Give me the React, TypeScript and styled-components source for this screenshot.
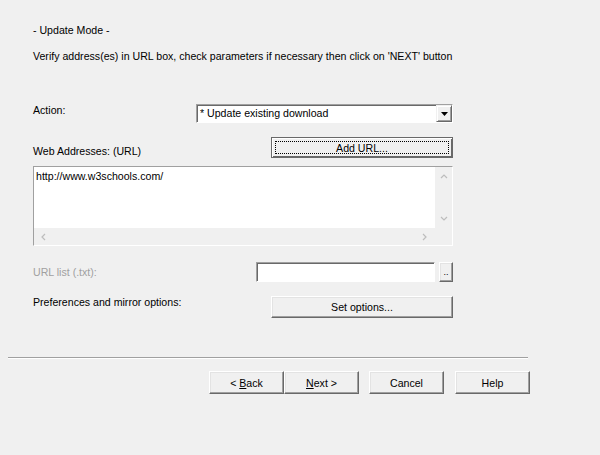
import React from "react";
import styled, { createGlobalStyle } from "styled-components";

const GlobalStyle = createGlobalStyle`
  html, body {
    margin: 0;
    padding: 0;
    background: #f0f0f0;
  }
  body {
    font-family: "Liberation Sans", Arial, sans-serif;
    font-size: 10.6px;
    color: #000;
  }
`;

const Window = styled.div`
  width: 600px;
  height: 455px;
  box-sizing: border-box;
  background: #f0f0f0;
  padding-top: 24px;
  display: flex;
  flex-direction: column;
`;

const Content = styled.div`
  width: 420px;
  margin-left: 33px;
  display: flex;
  flex-direction: column;
`;

const Text = styled.div<{ $top?: number }>`
  line-height: 13px;
  margin-top: ${(p) => p.$top ?? 0}px;
  white-space: nowrap;
`;

const Row = styled.div<{ $top: number; $label: number }>`
  display: grid;
  grid-template-columns: ${(p) => p.$label}px 1fr;
  align-items: start;
  margin-top: ${(p) => p.$top}px;
`;

const Label = styled.div<{ $pad?: number; $disabled?: boolean }>`
  line-height: 13px;
  padding-top: ${(p) => p.$pad ?? 0}px;
  color: ${(p) => (p.$disabled ? "#a0a0a0" : "#000")};
  white-space: nowrap;
`;

const Select = styled.div`
  height: 19px;
  box-sizing: border-box;
  display: flex;
  align-items: stretch;
  background: #fff;
  border-top: 1px solid #a0a0a0;
  border-left: 1px solid #a0a0a0;
  border-right: 1px solid #fff;
  border-bottom: 1px solid #fff;
  box-shadow: inset 1px 1px 0 #696969;
`;

const SelectText = styled.div`
  flex: 1;
  padding-left: 3px;
  line-height: 16px;
`;

const DropButton = styled.div`
  width: 16px;
  box-sizing: border-box;
  background: #f0f0f0;
  border-top: 1px solid #f0f0f0;
  border-left: 1px solid #f0f0f0;
  border-right: 1px solid #696969;
  border-bottom: 1px solid #696969;
  box-shadow: inset 1px 1px 0 #fff, inset -1px -1px 0 #a0a0a0;
  display: flex;
  align-items: center;
  justify-content: center;
`;

const Button = styled.button<{ $default?: boolean; $h?: number }>`
  height: ${(p) => p.$h ?? 22}px;
  box-sizing: border-box;
  margin: 0;
  padding: 0;
  font-family: inherit;
  font-size: 10.6px;
  color: #000;
  background: #f0f0f0;
  border: 1px solid;
  border-color: ${(p) =>
    p.$default ? "#696969" : "#fff #696969 #696969 #fff"};
  box-shadow: ${(p) =>
    p.$default
      ? "inset 1px 1px 0 #fff, inset -1px -1px 0 #696969"
      : "inset -1px -1px 0 #a0a0a0, inset 1px 1px 0 #e3e3e3"};
  display: flex;
  align-items: center;
  justify-content: center;
  cursor: default;
`;

const Focus = styled.span`
  flex: 1;
  align-self: stretch;
  margin: 3px;
  border: 1px dotted #000;
  display: flex;
  align-items: center;
  justify-content: center;
`;

const TextArea = styled.div`
  margin-top: 8px;
  height: 80px;
  box-sizing: border-box;
  border-top: 1px solid #a0a0a0;
  border-left: 1px solid #a0a0a0;
  border-right: 1px solid #fff;
  border-bottom: 1px solid #fff;
  box-shadow: inset 1px 1px 0 #696969;
  display: grid;
  grid-template-columns: 1fr 17px;
  grid-template-rows: 1fr 17px;
  background: #f0f0f0;
`;

const TextBody = styled.div`
  background: #fff;
  padding: 3px 0 0 2px;
  line-height: 13px;
`;

const ScrollV = styled.div`
  display: flex;
  flex-direction: column;
  justify-content: space-between;
  align-items: center;
  padding: 6px 0 6px;
  background: #f0f0f0;
`;

const ScrollH = styled.div`
  display: flex;
  justify-content: space-between;
  align-items: center;
  padding: 0 7px 0 6px;
  background: #f0f0f0;
`;

const Corner = styled.div`
  background: #f0f0f0;
`;

const InputGroup = styled.div`
  display: flex;
  gap: 4px;
`;

const Input = styled.div`
  flex: 1;
  height: 20px;
  box-sizing: border-box;
  background: #fff;
  border-top: 1px solid #a0a0a0;
  border-left: 1px solid #a0a0a0;
  border-right: 1px solid #fff;
  border-bottom: 1px solid #fff;
  box-shadow: inset 1px 1px 0 #696969;
`;

const SmallButton = styled(Button)`
  width: 14px;
  align-items: flex-end;
  padding-bottom: 4px;
  font-size: 9px;
  line-height: 9px;
`;

const Separator = styled.div`
  margin: 39px 0 0 8px;
  width: 520px;
  height: 1px;
  background: #a0a0a0;
  border-bottom: 1px solid #fff;
`;

const Footer = styled.div`
  display: flex;
  margin: 12px 0 0 209px;
`;

const NavButton = styled(Button)<{ $gap?: number }>`
  width: 75px;
  height: 23px;
  margin-left: ${(p) => p.$gap ?? 0}px;
`;

const Chevron = ({ d }: { d: string }) => (
  <svg width="8" height="6" viewBox="0 0 8 6">
    <path d={d} fill="none" stroke="#bdbdbd" strokeWidth="1.2" />
  </svg>
);

const ChevronH = ({ d }: { d: string }) => (
  <svg width="6" height="8" viewBox="0 0 6 8">
    <path d={d} fill="none" stroke="#bdbdbd" strokeWidth="1.2" />
  </svg>
);

export default function App() {
  return (
    <>
      <GlobalStyle />
      <Window>
        <Content>
          <Text>- Update Mode -</Text>
          <Text $top={13}>
            Verify address(es) in URL box, check parameters if necessary then
            click on 'NEXT' button
          </Text>

          <Row $top={41} $label={163}>
            <Label>Action:</Label>
            <Select>
              <SelectText>* Update existing download</SelectText>
              <DropButton>
                <svg width="7" height="4" viewBox="0 0 7 4">
                  <path d="M0 0h7L3.5 4z" fill="#000" />
                </svg>
              </DropButton>
            </Select>
          </Row>

          <Row $top={14} $label={238}>
            <Label $pad={8}>Web Addresses: (URL)</Label>
            <Button $default $h={21}>
              <Focus>Add URL...</Focus>
            </Button>
          </Row>

          <TextArea>
            <TextBody>http://www.w3schools.com/</TextBody>
            <ScrollV>
              <Chevron d="M1 5L4 2L7 5" />
              <Chevron d="M1 1L4 4L7 1" />
            </ScrollV>
            <ScrollH>
              <ChevronH d="M5 1L2 4L5 7" />
              <ChevronH d="M1 1L4 4L1 7" />
            </ScrollH>
            <Corner />
          </TextArea>

          <Row $top={16} $label={223}>
            <Label $pad={4} $disabled>
              URL list (.txt):
            </Label>
            <InputGroup>
              <Input />
              <SmallButton $h={20}>..</SmallButton>
            </InputGroup>
          </Row>

          <Row $top={14} $label={238}>
            <Label>Preferences and mirror options:</Label>
            <Button>Set options...</Button>
          </Row>
        </Content>

        <Separator />

        <Footer>
          <NavButton>
            &lt;&nbsp;<u>B</u>ack
          </NavButton>
          <NavButton>
            <u>N</u>ext &gt;
          </NavButton>
          <NavButton $gap={10}>Cancel</NavButton>
          <NavButton $gap={11}>Help</NavButton>
        </Footer>
      </Window>
    </>
  );
}
